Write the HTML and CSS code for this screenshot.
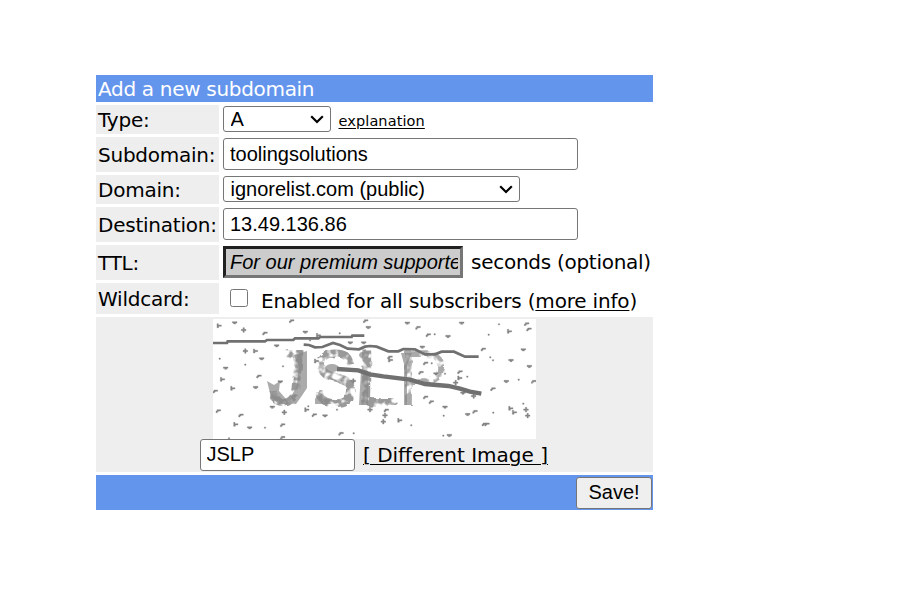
FILE: index.html
```
<!DOCTYPE html>
<html lang="en">
<head>
<meta charset="utf-8">
<title>Add a new subdomain</title>
<link rel="stylesheet" href="styles.css">
</head>
<body>
<form class="panel">
  <div class="heading">Add a new subdomain</div>
  <div class="row row-type">
    <label class="label">Type:</label>
    <div class="field">
      <span class="select select-type"><select><option>A</option></select><svg class="arrow" viewBox="0 0 14 9"><path d="M1.2 1.2 7 7 12.8 1.2"/></svg></span>
      <a class="explanation">explanation</a>
    </div>
  </div>
  <div class="row row-input">
    <label class="label">Subdomain:</label>
    <div class="field"><input class="text wide" type="text" value="toolingsolutions"></div>
  </div>
  <div class="row row-type">
    <label class="label">Domain:</label>
    <div class="field"><span class="select select-domain"><select><option>ignorelist.com (public)</option></select><svg class="arrow" viewBox="0 0 14 9"><path d="M1.2 1.2 7 7 12.8 1.2"/></svg></span></div>
  </div>
  <div class="row row-input">
    <label class="label">Destination:</label>
    <div class="field"><input class="text wide" type="text" value="13.49.136.86"></div>
  </div>
  <div class="row row-input">
    <label class="label">TTL:</label>
    <div class="field"><input class="ttl" type="text" value="For our premium supporters"><span class="seconds">seconds (optional)</span></div>
  </div>
  <div class="row row-wild">
    <label class="label">Wildcard:</label>
    <div class="field"><input class="check" type="checkbox"><span class="enabled">Enabled for all subscribers (<a>more info</a>)</span></div>
  </div>
  <div class="captcha">
    <svg class="image" viewBox="0 0 323 120" width="323" height="120">
      <defs>
        <path id="v" d="M-7-4H7V0H3V3H-3V0H-7z"/>
        <path id="p" d="M-2-7H2V-2H7V2H2V7H-2V2H-7V-2H-2z"/>
        <path id="r" d="M-7 5V0H-4V-4H7V0H0V2H-3V5z"/>
        <path id="t" d="M-7-6H-3V-2H6V2H-2V6H-7z"/>
        <path id="d" d="M-2-2H2V2H-2z"/>
        <filter id="worn" x="-5%" y="-5%" width="110%" height="110%">
          <feTurbulence type="fractalNoise" baseFrequency=".13" numOctaves="2" seed="8" result="n"/>
          <feDisplacementMap in="SourceGraphic" in2="n" scale="5" result="s"/>
          <feColorMatrix in="n" type="matrix" values="0 0 0 0 0  0 0 0 0 0  0 0 0 0 0  5 0 0 0 -1.7" result="m"/>
          <feComposite in="s" in2="m" operator="in"/>
        </filter>
      </defs>
      <rect width="323" height="120" fill="#fff"/>
      <g class="letters" filter="url(#worn)">
        <text transform="translate(55 86) skewX(-6)" textLength="34" lengthAdjust="spacingAndGlyphs">J</text>
        <text x="100" y="86" textLength="44" lengthAdjust="spacingAndGlyphs">S</text>
        <text x="144" y="86" textLength="42" lengthAdjust="spacingAndGlyphs">L</text>
        <text class="thin" x="186" y="86" textLength="49" lengthAdjust="spacingAndGlyphs">P</text>
      </g>
      <g class="blobs">
        <path d="M54 62 61 66 67 62 66 72 73 80 76 85H66L58 78z"/>
        <path d="M81 36 94 32 94 69 88 78 83 85 75 84 84 66 86 48z"/>
        <ellipse cx="119" cy="49" rx="7" ry="4"/>
        <path d="M102 80 106 73 116 80 118 85H102z"/>
        <ellipse cx="151" cy="36" rx="5" ry="3.5"/>
        <path d="M148 52H155V86H146z"/>
        <path d="M188 34H199L194 46V86H191V45z"/>
      </g>
      <g class="specks" transform="translate(-8 -4) scale(.33333)">
        <use href="#t" x="43" y="32"/><use href="#t" x="152" y="108"/><use href="#t" x="53" y="193"/><use href="#t" x="84" y="220"/><use href="#t" x="93" y="328"/><use href="#t" x="306" y="284"/><use href="#t" x="341" y="61"/><use href="#t" x="335" y="138"/>
        <use href="#v" x="89" y="24"/><use href="#v" x="301" y="52"/><use href="#v" x="215" y="93"/><use href="#v" x="170" y="132"/><use href="#v" x="62" y="160"/><use href="#v" x="152" y="218"/><use href="#v" x="202" y="277"/><use href="#v" x="134" y="339"/><use href="#v" x="360" y="303"/><use href="#v" x="436" y="84"/><use href="#v" x="476" y="84"/><use href="#v" x="490" y="38"/><use href="#v" x="226" y="201"/>
        <use href="#p" x="116" y="45"/><use href="#p" x="121" y="108"/><use href="#p" x="238" y="292"/><use href="#p" x="445" y="198"/><use href="#p" x="495" y="284"/>
        <use href="#r" x="260" y="18"/><use href="#r" x="180" y="55"/><use href="#r" x="162" y="184"/><use href="#r" x="40" y="288"/><use href="#r" x="108" y="301"/><use href="#r" x="31" y="229"/><use href="#r" x="233" y="330"/><use href="#r" x="328" y="300"/><use href="#r" x="408" y="356"/><use href="#r" x="482" y="18"/><use href="#r" x="233" y="368"/>
        <use href="#d" x="44" y="131"/><use href="#d" x="121" y="149"/><use href="#d" x="234" y="154"/><use href="#d" x="180" y="338"/><use href="#d" x="396" y="284"/><use href="#d" x="404" y="55"/><use href="#d" x="446" y="355"/><use href="#d" x="72" y="370"/><use href="#d" x="310" y="274"/><use href="#d" x="315" y="76"/>
      </g>
      <g class="specks" transform="translate(157 -4) scale(.33333)">
        <use href="#v" x="112" y="25"/><use href="#v" x="275" y="25"/><use href="#v" x="234" y="65"/><use href="#v" x="157" y="97"/><use href="#v" x="460" y="105"/><use href="#v" x="423" y="137"/><use href="#v" x="478" y="155"/><use href="#v" x="198" y="177"/><use href="#v" x="409" y="200"/><use href="#v" x="225" y="277"/><use href="#v" x="293" y="299"/><use href="#v" x="238" y="362"/><use href="#v" x="279" y="235"/>
        <use href="#p" x="257" y="203"/><use href="#p" x="311" y="243"/><use href="#p" x="45" y="301"/><use href="#p" x="40" y="320"/><use href="#p" x="468" y="284"/><use href="#p" x="473" y="302"/>
        <use href="#r" x="144" y="38"/><use href="#r" x="175" y="60"/><use href="#r" x="470" y="27"/><use href="#r" x="477" y="43"/><use href="#r" x="340" y="103"/><use href="#r" x="167" y="145"/><use href="#r" x="153" y="173"/><use href="#r" x="270" y="171"/><use href="#r" x="491" y="200"/><use href="#r" x="369" y="222"/><use href="#r" x="167" y="247"/><use href="#r" x="184" y="261"/><use href="#r" x="49" y="286"/><use href="#r" x="315" y="290"/><use href="#r" x="343" y="328"/><use href="#r" x="351" y="328"/><use href="#r" x="60" y="127"/>
        <use href="#t" x="419" y="49"/><use href="#t" x="270" y="189"/><use href="#t" x="90" y="316"/><use href="#t" x="423" y="280"/><use href="#t" x="434" y="292"/><use href="#t" x="62" y="135"/>
        <use href="#d" x="387" y="28"/><use href="#d" x="194" y="58"/><use href="#d" x="356" y="59"/><use href="#d" x="361" y="127"/><use href="#d" x="369" y="136"/><use href="#d" x="185" y="145"/><use href="#d" x="225" y="176"/><use href="#d" x="292" y="185"/><use href="#d" x="446" y="194"/><use href="#d" x="221" y="302"/><use href="#d" x="370" y="293"/><use href="#d" x="460" y="266"/><use href="#d" x="220" y="362"/><use href="#d" x="124" y="331"/>
      </g>
      <g class="scratches" transform="translate(-8 -4) scale(.33333)">
        <path d="M24 84H66L68 79H180L186 75H265L270 70H340L346 66H440L442 62H478"/>
        <path d="M296 89 312 90 330 97 352 96 384 84 405 90 428 101 462 103 480 95 495 93 515 95 550 109H580L595 102 630 103 660 118H690L710 110H747L780 125H821"/>
        <path class="heavy" d="M396 162 460 166 495 178 535 184 615 194 660 207 730 213 765 221 795 230 829 236"/>
      </g>
    </svg>
    <div class="answer"><input class="text code" type="text" value="JSLP"><a class="different">[&nbsp;Different Image&nbsp;]</a></div>
  </div>
  <div class="footer"><button class="save" type="button">Save!</button></div>
</form>
</body>
</html>
```
FILE: styles.css
```
* { box-sizing: border-box; }
body { margin: 0; padding: 75px 0 0 96px; background: #fff; color: #000; font: 20px/24px "DejaVu Sans", sans-serif; }
.panel { width: 557px; display: flex; flex-direction: column; gap: 3px; margin: 0; white-space: nowrap; }
.heading { height: 27px; padding: 2px; background: #6495ed; color: #fff; letter-spacing: -.31px; }
.row { display: grid; grid-template-columns: 123px 1fr; column-gap: 4px; }
.row-type { height: 29px; }
.row-input { height: 35px; }
.row-wild { height: 31px; }
.label { background: #eee; padding-left: 2px; display: flex; align-items: center; letter-spacing: -.24px; }
.field { display: flex; align-items: flex-start; padding-top: 1px; }
input, select, button { font: 20px "Liberation Sans", Arial, sans-serif; color: #000; margin: 0; }
a { text-decoration: underline; text-decoration-thickness: 1px; text-underline-offset: 2px; }
.text { height: 32px; border: 1px solid #767676; border-radius: 3px; padding: 0 6px; background: #fff; }
.wide { width: 355px; }
.select { position: relative; display: block; height: 26px; }
.select select { appearance: none; width: 100%; height: 26px; border: 1px solid #767676; border-radius: 3px; background: #fff; padding: 0 6.5px; display: block; }
.select-type { width: 108px; }
.select-domain { width: 297px; }
.arrow { position: absolute; right: 7px; top: 9px; width: 14px; height: 9px; fill: none; stroke: #000; stroke-width: 2.2; }
.explanation { margin: 3px 0 0 7.5px; font-size: 14.5px; letter-spacing: .1px; }
.ttl { width: 240px; height: 32px; border: 3px inset #767676; border-color: #212121 #767676 #767676 #212121; padding: 0 2px 0 4px; background: #ccc; font-style: italic; }
.ttl { border-style: solid; }
.seconds { margin: 4px 0 0 8px; letter-spacing: -.27px; }
.check { width: 18px; height: 18px; margin: 5px 0 0 7px; }
.enabled { margin: 5px 0 0 13px; letter-spacing: -.18px; }
.captcha { height: 155px; padding-top: 2px; background: #eee; display: flex; flex-direction: column; align-items: center; }
.image { display: block; flex: none; }
.letters { font: 78px "Liberation Sans", Arial, sans-serif; fill: #999; stroke: #999; stroke-width: 2; }
.letters .thin { fill: #aaa; stroke: none; }
.blobs { fill: #888; opacity: .7; }
.specks { fill: #858585; stroke: #858585; stroke-width: 1.2; }
.scratches { fill: none; stroke: #707070; stroke-width: 8; }
.scratches .heavy { stroke-width: 13; }
.answer { width: 349px; display: flex; align-items: center; }
.code { width: 155px; padding: 0 5.5px 2px; }
.different { margin-left: 8px; }
.footer { height: 35px; background: #6495ed; display: flex; justify-content: flex-end; align-items: center; padding-right: 1px; }
.save { width: 76px; height: 32px; border: 1px solid #767676; border-radius: 3px; background: #efefef; padding: 0; }
```
